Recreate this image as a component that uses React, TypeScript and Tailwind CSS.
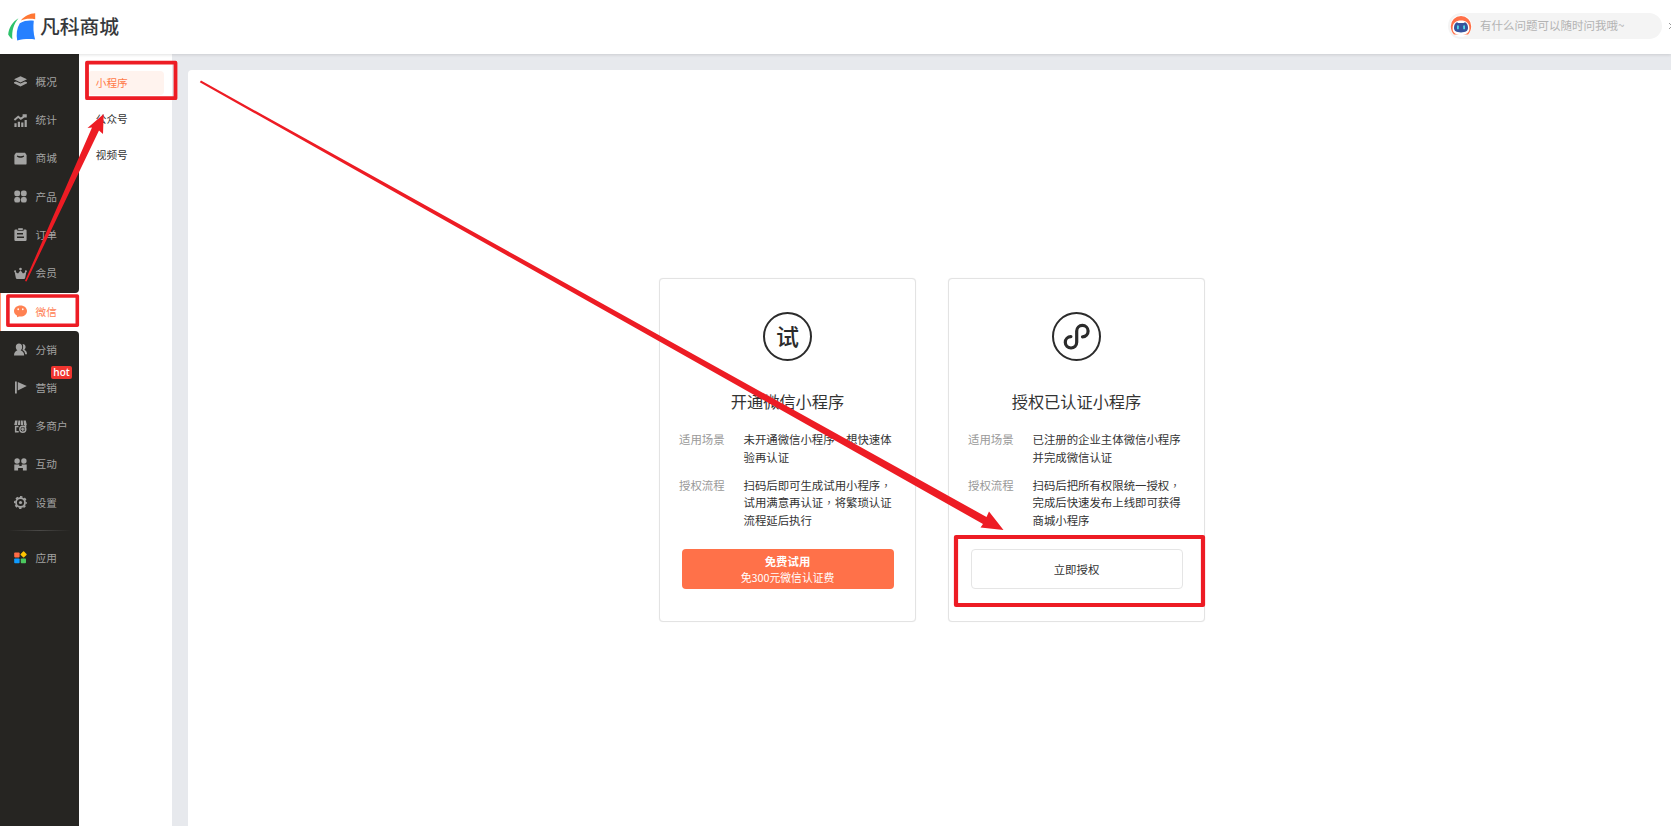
import type { ReactNode } from 'react';

interface NavItem {
    label: string;
    icon: ReactNode;
    badge?: string;
}

interface PlanCardProps {
    icon: ReactNode;
    title: string;
    scene: string[];
    steps: string[];
    children: ReactNode;
}

const topItems: NavItem[] = [
    {
        label: '概况',
        icon: (
            <>
                <path d="M6.5 1.2 13 4.3 6.5 7.4 0 4.3Z" />
                <path d="M0 7.2 2 6.4 6.5 8.6 11 6.4 13 7.2V8.3L6.5 11.6 0 8.3Z" />
            </>
        ),
    },
    {
        label: '统计',
        icon: (
            <>
                <path d="M.4 9.2h2.2V13H.4zM3.8 7.8H6V13H3.8zM7.2 8.6h2.2V13H7.2zM10.6 6h2.2v7h-2.2z" />
                <path d="M.4 6 4.2 2.8 6.8 4.8 11.6 1.4M8.6 1.2h3.2v2.4" fill="none" stroke="currentColor" strokeWidth="1.9" />
            </>
        ),
    },
    {
        label: '商城',
        icon: (
            <path
                fillRule="evenodd"
                d="M2 .8h9L12.6 3v8.4a1.2 1.2 0 0 1-1.2 1.2H1.6A1.2 1.2 0 0 1 .4 11.4V3ZM3.2 3.4l-.4 1c2 1.8 5.4 1.8 7.4 0l-.4-1c-2 1-4.6 1-6.6 0Z"
            />
        ),
    },
    {
        label: '产品',
        icon: (
            <>
                <rect x=".3" y=".6" width="5.8" height="5.6" rx="2.2" />
                <rect x="6.9" y=".6" width="5.8" height="5.6" rx="2.2" />
                <rect x=".3" y="7" width="5.8" height="5.6" rx="2.2" />
                <rect x="6.9" y="7" width="5.8" height="5.6" rx="2.2" />
            </>
        ),
    },
    {
        label: '订单',
        icon: (
            <>
                <path
                    fillRule="evenodd"
                    d="M1.6 1.4h1.8v1.4h6.2V1.4h1.8a1.2 1.2 0 0 1 1.2 1.2v9.2a1.2 1.2 0 0 1-1.2 1.2H1.6A1.2 1.2 0 0 1 .4 11.8V2.6a1.2 1.2 0 0 1 1.2-1.2ZM3 5v1.4h6V5ZM3 8.6V10h7V8.6Z"
                />
                <rect x="4.2" y=".2" width="4.6" height="1.8" />
            </>
        ),
    },
    {
        label: '会员',
        icon: (
            <>
                <path d="M.6 4.4 4 6.6 6.5 3.2 9 6.6l3.4-2.2-1.2 6.4A1.4 1.4 0 0 1 9.8 12H3.2a1.4 1.4 0 0 1-1.4-1.2Z" />
                <circle cx="6.5" cy="2" r="1.3" />
                <circle cx="1.1" cy="4.2" r="1" />
                <circle cx="11.9" cy="4.2" r="1" />
            </>
        ),
    },
];

const activeItem: NavItem = {
    label: '微信',
    icon: (
        <>
            <path d="M6.5.4C10.2.4 13 2.8 13 6s-2.8 5.6-6.5 5.6c-.5 0-1 0-1.4-.1L3 12.200l.1-1.500C1.2 9.7 0 8 0 6 0 2.8 2.8.4 6.5.4Z" />
            <ellipse cx="4.2" cy="4.2" rx=".8" ry="1" fill="#fff" />
            <ellipse cx="8.8" cy="4.2" rx=".8" ry="1" fill="#fff" />
        </>
    ),
};

const bottomItems: NavItem[] = [
    {
        label: '分销',
        icon: (
            <>
                <path d="M5 .6c2 0 3.2 1.5 3.2 3.4 0 1.4-.7 2.6-1.6 3.3 2 .8 3.4 2 3.6 5.1H0c.2-3.1 1.4-4.3 3.4-5.1C2.4 6.6 1.8 5.4 1.8 4 1.8 2.1 3 .6 5 .6Z" />
                <path d="M8.6 1c1.7 0 3 1.2 3 3 0 1.2-.6 2.2-1.3 2.8 1.7.7 2.6 2 2.7 4.4h-1.8c-.3-2-1.3-3.5-2.8-4.2.8-1.4 1-4.2.2-6Z" />
            </>
        ),
    },
    {
        label: '营销',
        badge: 'hot',
        icon: <path d="M1 .4h1.8v12.2H1zM3.8 1l9 4.1-9 4.3Z" />,
    },
    {
        label: '多商户',
        icon: (
            <>
                <path d="M1.2.6h2.4L3 5H.2ZM4.4.6h1.8V5H3.8ZM6.9.6h1.8L9.2 5H6.9ZM9.5.6h2.3L12.8 5H10Z" />
                <path d="M.9 5.8h3.6v1.4H2.4v3.9h2.3v1.5H.9ZM10.6 5h1.7v2h-1.7Z" />
                <circle cx="8.8" cy="9.2" r="3" fill="none" stroke="currentColor" strokeWidth="1.4" />
                <path d="M8.2 7.4h1.2v1.2h1.2v1.2H9.4V11H8.2V9.8H7V8.6h1.2Z" />
            </>
        ),
    },
    {
        label: '互动',
        icon: (
            <>
                <circle cx="3.1" cy="3" r="2.7" />
                <circle cx="9.9" cy="3" r="2.7" />
                <path d="M.3 6.5h5v1.6h2.4V6.5h5v6.1H8.9V10H4.1v2.6H.3Z" />
            </>
        ),
    },
    {
        label: '设置',
        icon: (
            <>
                <circle cx="6.5" cy="6.5" r="4.5" fill="none" stroke="currentColor" strokeWidth="1.8" />
                <circle cx="6.5" cy="6.5" r="5.7" fill="none" stroke="currentColor" strokeWidth="1.6" strokeDasharray="2.4 2.077" strokeDashoffset="1.2" />
                <circle cx="6.5" cy="6.5" r="1.6" />
            </>
        ),
    },
];

const NavIcon = ({ children }: { children: ReactNode }) => (
    <svg viewBox="0 0 13 13" className="h-[13px] w-[13px] shrink-0 overflow-visible" fill="currentColor">
        {children}
    </svg>
);

const NavRow = ({ item }: { item: NavItem }) => (
    <div className="relative flex h-[38.25px] items-center gap-[8.6px] pl-[14px]">
        <NavIcon>{item.icon}</NavIcon>
        <span>{item.label}</span>
        {item.badge && (
            <span className="absolute top-[-3px] left-[51px] flex h-[13px] w-[21px] items-center justify-center rounded-[2px] bg-[#f0352f] font-['Open_Sans',sans-serif] text-[10px] font-semibold text-white">
                {item.badge}
            </span>
        )}
    </div>
);

const Logo = () => (
    <div className="flex items-center">
        <svg width="28" height="28" viewBox="0 0 28 28" className="shrink-0">
            <path d="M10.5 5.2C4.5 8.6.6 15 .2 21.6c1 1.9 2.3 3.4 4.2 4.7C3.6 18 5.6 11 10.5 5.2Z" fill="#2dc26b" />
            <path d="M12.8 7.6C16.8 2.8 21.6.6 27.2.3V6.2C21.5 5.4 17.2 5.6 12.8 7.6Z" fill="#ff7733" />
            <path d="M11.8 10.2c4.6-2.5 9-3 14-2.4-.7 6-.5 12.5 1.3 18.6-6-.6-12.1-.4-17.9 1.2-1.1-6.4-.5-12.2 2.600-17.4Z" fill="#2680ff" />
        </svg>
        <span className="-mt-[2px] ml-1 text-[19.8px] leading-7 font-medium text-[#36383b]">凡科商城</span>
    </div>
);

const AssistantIcon = () => (
    <svg width="22" height="22" viewBox="0 0 22 22" className="shrink-0">
        <circle cx="11" cy="11" r="10.8" fill="#fff" />
        <path d="M.8 11.2a10.2 10.2 0 0 1 20.4 0c0 3.2-1.1 6-3.2 8.3H4C1.9 17.2.8 14.4.8 11.2Z" fill="#ff7048" />
        <path d="M2.6 13.5C2.6 8 6 5.6 11 5.6s8.4 2.4 8.4 7.9c0 4-3 6.5-8.4 6.5s-8.4-2.5-8.4-6.5Z" fill="#fff" />
        <path d="M4 12.8c0-3 1.2-5 3-5.6l1.3.9h5.4l1.3-.9c1.8.6 3 2.6 3 5.6 0 3.3-2.3 4.6-7 4.6s-7-1.3-7-4.6Z" fill="#38539c" />
        <rect x="7" y="10.3" width="1.8" height="4" rx=".9" fill="#54dbe8" />
        <rect x="13.2" y="10.3" width="1.8" height="4" rx=".9" fill="#54dbe8" />
    </svg>
);

const Header = () => (
    <header className="relative z-10 flex h-[54px] shrink-0 items-center justify-between bg-white pl-2 shadow-[0_1px_3px_rgba(0,0,0,0.12)]">
        <Logo />
        <div className="-mt-[2px] flex items-center overflow-hidden">
            <div className="flex h-[26px] w-[214px] items-center rounded-full bg-[#f4f4f4] pl-[2px]">
                <AssistantIcon />
                <span className="ml-2 text-[11.5px] whitespace-nowrap text-[#b3b3b3]">有什么问题可以随时问我哦~</span>
            </div>
            <svg width="9" height="8" viewBox="0 0 9 8" className="-mr-[6px] ml-[6px] shrink-0">
                <path d="M1 1l6 6M7 1 1 7" stroke="#999" strokeWidth="1" />
            </svg>
        </div>
    </header>
);

const Sidebar = () => (
    <nav className="flex w-[79px] shrink-0 flex-col bg-white text-[10.67px] text-[#a3a3a2]">
        {/* Dark block above the active item */}
        <div className="h-[238.5px] rounded-br-[4px] bg-[#262522] pt-[8.7px]">
            {topItems.map((item) => (
                <NavRow key={item.label} item={item} />
            ))}
        </div>

        {/* Active item */}
        <div className="flex h-[38px] items-center gap-[8.6px] border-l border-[#ff9a7a] bg-white pl-[13px] text-[#ff8152]">
            <NavIcon>{activeItem.icon}</NavIcon>
            <span>{activeItem.label}</span>
        </div>

        {/* Dark block below the active item */}
        <div className="flex-1 rounded-tr-[4px] bg-[#262522]">
            {bottomItems.map((item) => (
                <NavRow key={item.label} item={item} />
            ))}
            <div className="mx-2 mt-[8px] h-px bg-linear-to-r from-transparent via-[#4a4947] to-transparent"></div>
            <div className="mt-2 flex h-[38px] items-center gap-[8.6px] pl-[14px]">
                <NavIcon>
                    <rect x=".2" y="1.4" width="5.4" height="5" rx=".8" fill="#ff6b45" />
                    <rect x="7.2" y="1" width="4.8" height="4.8" rx=".7" fill="#ffc400" transform="rotate(45 9.6 3.4)" />
                    <rect x=".2" y="7.4" width="5.4" height="4.8" rx=".8" fill="#0f9bff" />
                    <rect x="6.8" y="7.4" width="5.2" height="4.8" rx=".8" fill="#4cc85f" />
                </NavIcon>
                <span>应用</span>
            </div>
        </div>
    </nav>
);

const SubMenu = () => (
    <div className="flex w-[93px] shrink-0 flex-col bg-white pt-[17px] pl-[9px] text-[10.67px] text-[#333]">
        <div className="flex h-[24px] w-[76px] items-center rounded-[4px] bg-[#fff3ee] pl-[7.8px] text-[#ff7a48]">小程序</div>
        <div className="mt-3 flex h-[24px] items-center pl-[7.8px]">公众号</div>
        <div className="mt-3 flex h-[24px] items-center pl-[7.8px]">视频号</div>
    </div>
);

// Full-width commas sit in the middle of their cell
const Line = ({ text }: { text: string }) => (
    <div className="h-[17.6px] whitespace-nowrap">
        {text.split('，').map((part, i) => (
            <span key={i}>
                {i > 0 && <span className="font-['Noto_Sans_CJK_TC',sans-serif] font-light" lang="zh-TW">，</span>}
                {part}
            </span>
        ))}
    </div>
);

const InfoRow = ({ label, lines }: { label: string; lines: string[] }) => (
    <div className="flex text-[11.4px] leading-[17.6px]">
        <div className="w-[64.5px] shrink-0 text-[#999]">{label}</div>
        <div className="text-[#333]">
            {lines.map((line) => (
                <Line key={line} text={line} />
            ))}
        </div>
    </div>
);

const PlanCard = ({ icon, title, scene, steps, children }: PlanCardProps) => (
    <section className="flex h-[344px] w-[257px] flex-col rounded-[4px] border border-[#e3e3e3] bg-white pt-[33px] shadow-[0_0_1px_rgba(0,0,0,0.1)]">
        <div className="flex justify-center">{icon}</div>
        <h2 className="mt-[28px] text-center text-[16.2px] leading-6 text-[#333]">{title}</h2>
        <div className="mt-[18px] ml-[19px] flex flex-col gap-[10.5px]">
            <InfoRow label="适用场景" lines={scene} />
            <InfoRow label="授权流程" lines={steps} />
        </div>
        {children}
    </section>
);

const TrialIcon = () => (
    <div className="flex h-[49px] w-[49px] items-center justify-center rounded-full border-2 border-[#2b2b2b] pb-[2px] text-[23px] leading-none font-medium text-[#2b2b2b]">
        试
    </div>
);

const MiniProgramIcon = () => (
    <svg width="49" height="49" viewBox="0 0 49 49" fill="none" stroke="#2b2b2b">
        <circle cx="24.5" cy="24.5" r="23.5" strokeWidth="2" />
        <path
            d="M30.5 24.8a5.7 5.7 0 1 0-5.8-5.7v11.2a5.7 5.7 0 1 1-5.8-5.7"
            strokeWidth="3.2"
            strokeLinecap="round"
        />
    </svg>
);

// Red frames and arrows that walk the reader through the steps
const GuideOverlay = () => (
    <svg width="1671" height="826" viewBox="0 0 1671 826" className="pointer-events-none absolute top-0 left-0 z-20">
        <g fill="none" stroke="#ed1c24" strokeLinejoin="round">
            <rect x="87" y="62.7" width="88.5" height="35.5" strokeWidth="3.8" />
            <rect x="7.9" y="296" width="69.4" height="29.2" strokeWidth="3.6" />
            <rect x="956" y="537" width="247" height="68" strokeWidth="4.2" />
        </g>
        <g fill="#ed1c24">
            <path d="M25 281 92 127.5 87.5 128 103.7 114 103 134 99 130.5 26.5 281.5Z" />
            <path d="M199.8 82.2 201 80.6 986.5 517 989 511.5 1003.5 530 980.5 527.5 983 524Z" />
        </g>
    </svg>
);

export default function App() {
    return (
        <div className="relative flex h-[826px] w-full flex-col overflow-hidden bg-[#e7e9ed] font-['Noto_Sans_CJK_SC',sans-serif]">
            <Header />
            <div className="flex min-h-0 flex-1">
                <Sidebar />
                <SubMenu />
                <main className="mt-4 ml-4 flex flex-1 justify-start gap-8 rounded-tl-[4px] bg-white pt-[208px] pl-[471px]">
                    <PlanCard
                        icon={<TrialIcon />}
                        title="开通微信小程序"
                        scene={['未开通微信小程序，想快速体', '验再认证']}
                        steps={['扫码后即可生成试用小程序，', '试用满意再认证，将繁琐认证', '流程延后执行']}
                    >
                        <button className="mt-5 ml-[21.5px] flex h-[40px] w-[212px] flex-col items-center justify-center rounded-[4px] bg-[#ff7149] text-[11.4px] leading-[16.5px] text-white">
                            <span className="font-bold">免费试用</span>
                            <span className="text-[10.8px]">免300元微信认证费</span>
                        </button>
                    </PlanCard>
                    <PlanCard
                        icon={<MiniProgramIcon />}
                        title="授权已认证小程序"
                        scene={['已注册的企业主体微信小程序', '并完成微信认证']}
                        steps={['扫码后把所有权限统一授权，', '完成后快速发布上线即可获得', '商城小程序']}
                    >
                        <button className="mt-5 ml-[21.5px] flex h-[40px] w-[212px] items-center justify-center rounded-[4px] border border-[#e5e5e5] text-[11.4px] text-[#333]">
                            立即授权
                        </button>
                    </PlanCard>
                </main>
            </div>
            <GuideOverlay />
        </div>
    );
}
